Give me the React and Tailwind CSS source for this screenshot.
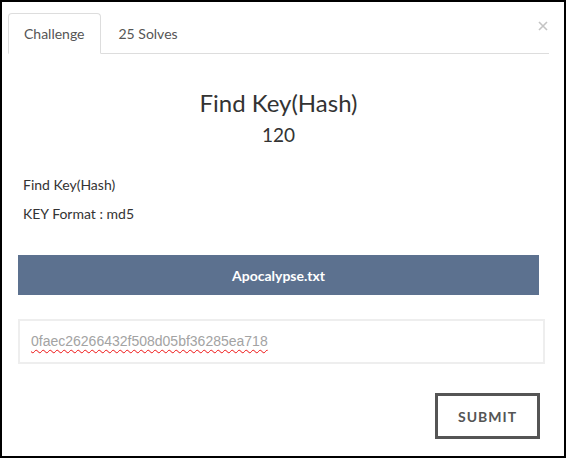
export default function App() {
  return (
    <div className="relative w-[566px] h-[458px] border-2 border-black bg-white font-['Lato','Noto_Sans',sans-serif] text-[#333]">
      {/* Tabs */}
      <div className="ml-[6px] mr-[15px] pt-[11px]">
        <div className="flex border-b border-[#ddd]">
          <div className="-mb-px mr-[2px] h-[41px] px-[15px] border border-[#ddd] border-b-white rounded-t-[4px] bg-white text-[14px] leading-[39px] text-[#555]">
            Challenge
          </div>
          <div className="-mb-px mr-[2px] h-[41px] px-[15px] border border-transparent text-[14px] leading-[39px] text-[#555]">
            25 Solves
          </div>
        </div>
      </div>
      <button className="absolute left-[536px] top-[19px] w-[10px] h-[10px]" aria-label="Close">
        <svg width="10" height="10" viewBox="0 0 10 10">
          <path d="M1 1L9 9M9 1L1 9" stroke="#c4c4c4" strokeWidth="1.6" />
        </svg>
      </button>

      {/* Title */}
      <div className="ml-[16px] w-[521px] mt-[33px] text-center">
        <h3 className="text-[24px] leading-[32px] text-[#333]">Find Key(Hash)</h3>
        <div className="mt-[4px] text-[19px] leading-[24px] text-[#333]">120</div>
      </div>

      {/* Description */}
      <div className="ml-[21px] mt-[28px] text-[14px] leading-[20px] text-[#333]">
        <p>Find Key(Hash)</p>
        <p className="mt-[9px]">KEY Format : md5</p>
      </div>

      {/* File */}
      <div className="ml-[16px] mt-[31px] w-[521px] h-[40px] bg-[#5c718f] flex items-center justify-center text-white font-bold text-[14px]">
        Apocalypse.txt
      </div>

      {/* Key input */}
      <div className="ml-[16px] mt-[24px] w-[527px] h-[45px] border-2 border-[#eee] flex items-center pl-[11px]">
        <span className="font-['Liberation_Sans',Arial,sans-serif] text-[14px] text-[#a3a3a3] underline decoration-wavy decoration-[#e11] decoration-1 underline-offset-[3px]">
          0faec26266432f508d05bf36285ea718
        </span>
      </div>

      {/* Submit */}
      <div className="ml-[433px] mt-[29px] w-[105px] h-[46px] border-[3px] border-[#555] flex items-center justify-center text-[14px] font-bold tracking-[1px] text-[#555]">
        SUBMIT
      </div>
    </div>
  );
}
